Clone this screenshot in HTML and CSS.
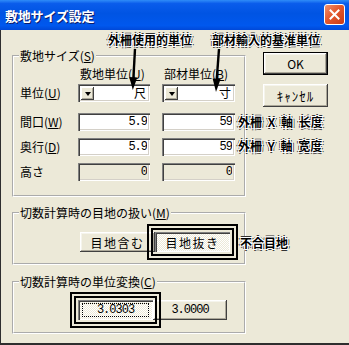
FILE: index.html
```html
<!DOCTYPE html>
<html lang="ja">

<head>
    <meta charset="UTF-8">
    <meta name="viewport" content="width=device-width, initial-scale=1.0">
    <link rel="stylesheet" href="styles.css">
    <title>敷地サイズ設定</title>
</head>

<body>
    <div class="window">
        <div class="titlebar">
            <span class="title">敷地サイズ設定</span>
            <span class="close-btn">
                <svg width="11" height="11" viewBox="0 0 11 11">
                    <path d="M1.5 1.5 L9.5 9.5 M9.5 1.5 L1.5 9.5" stroke="#fff" stroke-width="2" stroke-linecap="square" />
                </svg>
            </span>
        </div>

        <div class="client">
            <div class="groups">
                <fieldset class="group group-size">
                    <legend>敷地サイズ(<u>S</u>)</legend>
                    <div class="row head-row">
                        <span class="row-label"></span>
                        <span class="cell col-head">敷地単位(<u>U</u>)</span>
                        <span class="cell col-head">部材単位(<u>B</u>)</span>
                    </div>
                    <div class="row combo-row">
                        <span class="row-label">単位(<u>U</u>)</span>
                        <div class="cell combo"><span class="drop"></span><span class="combo-val">尺</span></div>
                        <div class="cell combo"><span class="drop"></span><span class="combo-val">寸</span></div>
                    </div>
                    <div class="row first-input">
                        <span class="row-label">間口(<u>W</u>)</span>
                        <input class="cell field" type="text" value="5.9">
                        <input class="cell field" type="text" value="59">
                    </div>
                    <div class="row">
                        <span class="row-label">奥行(<u>D</u>)</span>
                        <input class="cell field" type="text" value="5.9">
                        <input class="cell field" type="text" value="59">
                    </div>
                    <div class="row">
                        <span class="row-label">高さ</span>
                        <input class="cell field" type="text" value="0" disabled>
                        <input class="cell field" type="text" value="0" disabled>
                    </div>
                </fieldset>

                <fieldset class="group group-joint">
                    <legend>切数計算時の目地の扱い(<u>M</u>)</legend>
                    <div class="toggles joint-toggles">
                        <button class="toggle">目地含む</button>
                        <button class="toggle is-down">目地抜き</button>
                    </div>
                </fieldset>

                <fieldset class="group group-unit">
                    <legend>切数計算時の単位変換(<u>C</u>)</legend>
                    <div class="toggles unit-toggles">
                        <button class="toggle num is-down"><span class="focus">3.0303</span></button>
                        <button class="toggle num">3.0000</button>
                    </div>
                </fieldset>
            </div>

            <div class="actions">
                <button class="btn btn-default">OK</button>
                <button class="btn btn-cancel">ｷｬﾝｾﾙ</button>
            </div>
        </div>

        <!-- notes pasted over the dialog -->
        <span class="note note-a">外柵使用的単位</span>
        <span class="note note-b">部材輸入的基准単位</span>
        <span class="note note-c">外柵 X 軸 长度</span>
        <span class="note note-d">外柵 Y 軸 宽度</span>
        <span class="note note-e">不合目地</span>
        <svg class="arrows" width="349" height="345" viewBox="0 0 349 345">
            <path d="M135 49 L133.3 80" stroke="#000" stroke-width="2.4" />
            <polygon points="129.3,77 137.3,77.5 132.8,90" fill="#000" />
            <path d="M219 49 L216.6 81" stroke="#000" stroke-width="2.4" />
            <polygon points="212.6,78.5 220.6,79 216,92" fill="#000" />
        </svg>
    </div>
</body>

</html>
```

FILE: styles.css
```css
body {
    margin: 0;
    font-family: "Noto Sans CJK JP", sans-serif;
    font-size: 12px;
    color: #000;
}

.window {
    position: relative;
    width: 349px;
    height: 345px;
    background-color: #ece9d8;
    overflow: hidden;
}

.titlebar {
    height: 30px;
    box-sizing: border-box;
    padding: 0 4px 0 5px;
    display: flex;
    align-items: center;
    justify-content: space-between;
    background: linear-gradient(to bottom, #2f8cf8 0%, #0a5ceb 12%, #0054e3 45%, #0058ee 85%, #0048d8 100%);
}

.title {
    color: #fff;
    font-weight: bold;
    font-size: 13px;
    letter-spacing: -0.2px;
    text-shadow: 1px 1px 0 #0a1c6a;
}

.close-btn {
    width: 21px;
    height: 21px;
    box-sizing: border-box;
    border: 1px solid #fff;
    border-radius: 3px;
    background: linear-gradient(to bottom right, #f0926e 0%, #e4582e 45%, #c93a14 100%);
    display: flex;
    align-items: center;
    justify-content: center;
    margin-bottom: 1px;
}

.client {
    height: 315px;
    box-sizing: border-box;
    border-left: 1px solid #2e2e2e;
    border-bottom: 2px solid #2e2e2e;
    display: flex;
    align-items: flex-start;
}

.groups {
    margin-left: 11px;
    width: 234px;
}

.group {
    margin: 0;
    padding: 0 0 0 5px;
    border: 2px groove #fff;
    min-width: 0;
}

.group legend {
    padding: 0 1px;
    line-height: 14px;
}

.group-size {
    margin-top: 19px;
    padding-top: 4px;
    padding-bottom: 14px;
}

.group-joint {
    margin-top: 9px;
    padding-top: 12px;
    padding-bottom: 11px;
}

.group-unit {
    margin-top: 10px;
    padding-top: 11px;
    padding-bottom: 12px;
}

.row {
    display: flex;
    align-items: center;
    height: 18px;
    margin-top: 7px;
}

.head-row {
    height: 14px;
    margin-top: 0;
}

.combo-row {
    margin-top: 3px;
}

.first-input {
    margin-top: 11px;
}

.row-label {
    width: 58px;
    padding-left: 1px;
    line-height: 14px;
}

.cell {
    width: 72px;
    box-sizing: border-box;
    flex: none;
}

.cell + .cell {
    margin-left: 12px;
    width: 73px;
}

.col-head {
    padding-left: 2px;
    line-height: 14px;
    white-space: nowrap;
}

.field,
.combo {
    height: 18px;
    border: none;
    margin: 0;
    background-color: #fff;
    box-shadow: inset 1px 1px 0 #808080, inset 2px 2px 0 #404040, inset -1px -1px 0 #fff, inset -2px -2px 0 #d4d0c8;
}

.field {
    padding: 0 3px 0 0;
    text-align: right;
    font-family: "Liberation Mono", monospace;
    font-size: 12px;
    letter-spacing: -1px;
    color: #000;
    outline: none;
}

.field:disabled {
    background-color: #ece9d8;
    color: #000;
}

.combo {
    display: flex;
    align-items: center;
    padding: 0 4px 0 3px;
}

.drop {
    width: 13px;
    height: 13px;
    box-sizing: border-box;
    background-color: #ece9d8;
    box-shadow: inset -1px -1px 0 #404040, inset 1px 1px 0 #fff, inset -2px -2px 0 #aca899;
    display: flex;
    align-items: center;
    justify-content: center;
}

.drop::after {
    content: "";
    border-left: 3.5px solid transparent;
    border-right: 3.5px solid transparent;
    border-top: 4px solid #000;
    margin-top: 1px;
}

.combo-val {
    margin-left: auto;
    line-height: 14px;
}

.toggles {
    display: flex;
    height: 20px;
}

.joint-toggles {
    margin-left: 61px;
}

.unit-toggles {
    margin-left: 59px;
}

.toggle,
.btn {
    font-family: inherit;
    font-size: 12px;
    color: #000;
    padding: 0;
    border: none;
    background-color: #ece9d8;
    box-shadow: inset -1px -1px 0 #404040, inset 1px 1px 0 #fff, inset -2px -2px 0 #aca899, inset 2px 2px 0 #f5f4ec;
}

.toggle {
    width: 75px;
    height: 20px;
    letter-spacing: 1.5px;
}

.toggle.num {
    width: 74px;
    font-family: "Liberation Mono", monospace;
    letter-spacing: -1px;
}

.toggle.is-down {
    background: repeating-conic-gradient(#fff 0 25%, #ece9d8 0 50%) 0 0 / 2px 2px;
    box-shadow: inset 1px 1px 0 #808080, inset 2px 2px 0 #404040, inset -1px -1px 0 #fff;
    outline: 6px double #000;
    outline-offset: 2px;
    position: relative;
}

.toggle.num.is-down {
    width: 75px;
    display: flex;
    padding: 3px 4px 3px 4px;
    box-sizing: border-box;
}

.focus {
    flex: 1;
    border: 1px dotted #000;
    display: flex;
    align-items: center;
    justify-content: center;
    line-height: 12px;
}

.actions {
    margin-left: 17px;
    margin-top: 22px;
    display: flex;
    flex-direction: column;
    gap: 9px;
}

.btn {
    width: 65px;
    height: 23px;
}

.btn-default {
    border: 1px solid #000;
}

.btn-cancel {
    letter-spacing: 1px;
    font-size: 13px;
}

.note {
    position: absolute;
    font-weight: bold;
    font-size: 12px;
    line-height: 16px;
    white-space: nowrap;
    color: #000;
    text-shadow: 1px 0 0 #fff, -1px 0 0 #fff, 0 1px 0 #fff, 0 -1px 0 #fff,
        1px 1px 0 #fff, -1px -1px 0 #fff, 1px -1px 0 #fff, -1px 1px 0 #fff,
        2px 0 0 #333, -2px 0 0 #333, 0 2px 0 #333, 0 -2px 0 #333;
}

.note-a {
    left: 108px;
    top: 32px;
}

.note-b {
    left: 212px;
    top: 32px;
}

.note-c {
    left: 238px;
    top: 114px;
    word-spacing: 3px;
}

.note-d {
    left: 238px;
    top: 138px;
    word-spacing: 3px;
}

.note-e {
    left: 240px;
    top: 235px;
}

.arrows {
    position: absolute;
    left: 0;
    top: 0;
    pointer-events: none;
}
```
